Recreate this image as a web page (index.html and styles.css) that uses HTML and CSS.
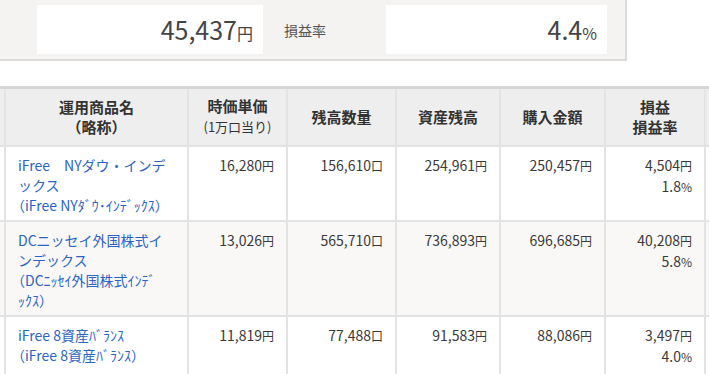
FILE: index.html
```html
<!DOCTYPE html>
<html lang="ja">
<head>
<meta charset="utf-8">
<title>運用商品</title>
<link rel="stylesheet" href="styles.css">
</head>
<body>
<section class="summary">
  <div class="value-box value-box--amount"><span class="big">45,437</span><span class="unit">円</span></div>
  <div class="summary-label">損益率</div>
  <div class="value-box value-box--rate"><span class="big">4.4</span><span class="unit">%</span></div>
</section>

<div class="table-wrap">
  <table class="holdings">
    <thead>
      <tr>
        <th class="edge"></th>
        <th class="c-name">運用商品名<br>（略称）</th>
        <th class="c-price">時価単価<br><span class="sub">(1万口当り)</span></th>
        <th class="c-qty">残高数量</th>
        <th class="c-bal">資産残高</th>
        <th class="c-buy">購入金額</th>
        <th class="c-pl">損益<br>損益率</th>
        <th class="edge-r"></th>
      </tr>
    </thead>
    <tbody>
      <tr>
        <td class="edge"></td>
        <td class="name"><a href="#">iFree　NYダウ・インデ<br>ックス<span class="abbr">（iFree NYﾀﾞｳ･ｲﾝﾃﾞｯｸｽ）</span></a></td>
        <td class="num">16,280<span class="u">円</span></td>
        <td class="num">156,610<span class="u">口</span></td>
        <td class="num">254,961<span class="u">円</span></td>
        <td class="num">250,457<span class="u">円</span></td>
        <td class="num">4,504<span class="u">円</span><br>1.8<span class="u">%</span></td>
        <td class="edge-r"></td>
      </tr>
      <tr class="alt">
        <td class="edge"></td>
        <td class="name"><a href="#">DCニッセイ外国株式イ<br>ンデックス<span class="abbr">（DCﾆｯｾｲ外国株式ｲﾝﾃﾞ<br>ｯｸｽ）</span></a></td>
        <td class="num">13,026<span class="u">円</span></td>
        <td class="num">565,710<span class="u">口</span></td>
        <td class="num">736,893<span class="u">円</span></td>
        <td class="num">696,685<span class="u">円</span></td>
        <td class="num">40,208<span class="u">円</span><br>5.8<span class="u">%</span></td>
        <td class="edge-r"></td>
      </tr>
      <tr>
        <td class="edge"></td>
        <td class="name"><a href="#">iFree 8資産ﾊﾞﾗﾝｽ<span class="abbr">（iFree 8資産ﾊﾞﾗﾝｽ）</span></a></td>
        <td class="num">11,819<span class="u">円</span></td>
        <td class="num">77,488<span class="u">口</span></td>
        <td class="num">91,583<span class="u">円</span></td>
        <td class="num">88,086<span class="u">円</span></td>
        <td class="num">3,497<span class="u">円</span><br>4.0<span class="u">%</span></td>
        <td class="edge-r"></td>
      </tr>
    </tbody>
  </table>
</div>
</body>
</html>
```

FILE: styles.css
```css
* {
  box-sizing: border-box;
}

html,
body {
  margin: 0;
  padding: 0;
  overflow: hidden;
  background: #ffffff;
}

body {
  width: 709px;
  height: 374px;
  font-family: "Noto Sans CJK JP", "Noto Sans", sans-serif;
  color: #333333;
}

/* ---------- summary panel ---------- */
.summary {
  display: flex;
  align-items: center;
  width: 627px;
  height: 61px;
  padding: 5px 0 5px 37px;
  background: #f4f3f1;
  border-right: 2px solid #dcdbd9;
  border-bottom: 2px solid #dcdbd9;
}

.value-box {
  height: 49px;
  line-height: 49px;
  padding-right: 10px;
  background: #ffffff;
  text-align: right;
  color: #444444;
  white-space: nowrap;
}

.value-box--amount {
  width: 226px;
}

.value-box--rate {
  width: 221px;
}

.value-box .big {
  font-size: 25px;
}

.value-box .unit {
  font-size: 16px;
}

.summary-label {
  width: 123px;
  padding-left: 21px;
  font-size: 14px;
  color: #555555;
}

/* ---------- table ---------- */
.table-wrap {
  margin-top: 25px;
  width: 709px;
  overflow: hidden;
}

.holdings {
  table-layout: fixed;
  border-collapse: separate;
  border-spacing: 0;
  width: 826px;
  border-top: 3px solid #d6d6d6;
}

.holdings th,
.holdings td {
  border-right: 2px solid #e3e3e3;
  border-bottom: 2px solid #e3e3e3;
  line-height: 20px;
}

.holdings th {
  padding: 7px 2px 8px;
  background: #eeeeee;
  font-size: 15px;
  font-weight: bold;
  text-align: center;
  vertical-align: middle;
  color: #333333;
}

.holdings th .sub {
  font-size: 13px;
  font-weight: normal;
}

.holdings .edge { width: 6px; padding: 0; }
.holdings .c-name { width: 183px; }
.holdings .c-price { width: 99px; }
.holdings .c-qty { width: 109px; }
.holdings .c-bal { width: 104px; }
.holdings .c-buy { width: 105px; }
.holdings .c-pl { width: 100px; }
.holdings .edge-r { width: 120px; }

.holdings td {
  padding: 8px 12px 5px;
  font-size: 14px;
  vertical-align: top;
  background: #ffffff;
}

.holdings tr.alt td {
  background: #f9f8f6;
}

.holdings tbody tr:last-child td {
  padding-bottom: 8px;
  border-bottom-color: #d6d6d6;
}

.holdings td.edge {
  padding: 0;
}

.holdings td.name {
  padding-left: 12px;
  padding-right: 4px;
}

.holdings td.name a {
  color: #2b64c4;
  text-decoration: none;
}

.holdings td.name .abbr {
  display: block;
  text-indent: -7px;
}

.holdings td.num {
  text-align: right;
  color: #3a3a3a;
  white-space: nowrap;
}

.holdings td.num .u {
  font-size: 12px;
}
```
